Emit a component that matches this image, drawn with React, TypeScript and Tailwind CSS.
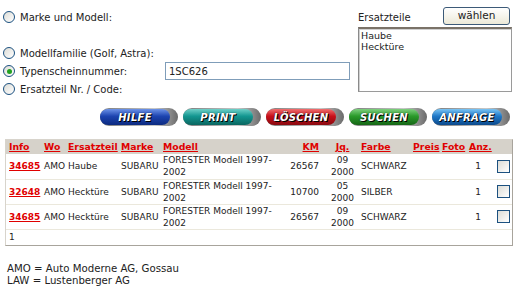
import React from "react";

const font = { fontFamily: '"DejaVu Sans", Verdana, sans-serif' };

function Radio({ checked }: { checked?: boolean }) {
  return (
    <span className="w-[12px] h-[12px] rounded-full border border-[#1c5180] bg-[linear-gradient(135deg,#dcdcd6,#ffffff)] flex items-center justify-center shrink-0">
      {checked && <span className="w-[5px] h-[5px] rounded-full bg-[#21a121]" />}
    </span>
  );
}

function Check() {
  return (
    <span className="block w-[13px] h-[13px] border border-[#1c5180] bg-[linear-gradient(135deg,#dcdcd6,#ffffff)]" />
  );
}

const buttons = [
  { label: "HILFE", cls: "bg-[linear-gradient(to_bottom,#6d93e8,#1d44b0_45%,#0c2a80)]" },
  { label: "PRINT", cls: "bg-[linear-gradient(to_bottom,#6fd0c8,#139690_45%,#0a6660)]" },
  { label: "LÖSCHEN", cls: "bg-[linear-gradient(to_bottom,#f07070,#c8101a_45%,#8a0a10)]" },
  { label: "SUCHEN", cls: "bg-[linear-gradient(to_bottom,#7fd07f,#2a9a2a_45%,#166616)]" },
  { label: "ANFRAGE", cls: "bg-[linear-gradient(to_bottom,#7ac4f4,#1f78c8_45%,#0c4a8c)]" },
];

function Pill({ label, cls }: { label: string; cls: string }) {
  return (
    <div className="w-[78px] h-[18px] rounded-full bg-[linear-gradient(to_right,#7a7a7a,#c8c8c8_70%,#6a6a6a)] flex items-center">
      <div className={`w-[70px] h-[16px] rounded-full flex items-center justify-center ${cls}`}>
        <span className="text-white font-bold italic text-[10px] tracking-[0.3px] [text-shadow:0_0_1px_#000,1px_1px_0_#000]" style={font}>
          {label}
        </span>
      </div>
    </div>
  );
}

const rows = [
  { id: "34685", teil: "Haube", km: "26567", m: "09", farbe: "SCHWARZ" },
  { id: "32648", teil: "Hecktüre", km: "10700", m: "05", farbe: "SILBER" },
  { id: "34685", teil: "Hecktüre", km: "26567", m: "09", farbe: "SCHWARZ" },
];

const th = "text-[#e00000] underline text-left pl-[3px] whitespace-nowrap font-normal";

export default function App() {
  return (
    <div className="w-[518px] h-[293px] bg-white text-[#222] text-[10px] overflow-hidden" style={font}>
      <div className="flex">
        <div className="w-[358px] pl-[3px] pt-[8px] flex flex-col">
          <div className="h-[18px] flex items-center gap-[5px]"><Radio /><span>Marke und Modell:</span></div>
          <div className="h-[18px]" />
          <div className="h-[18px] flex items-center gap-[5px]"><Radio /><span>Modellfamilie (Golf, Astra):</span></div>
          <div className="h-[18px] flex items-center">
            <div className="w-[162px] flex items-center gap-[5px]"><Radio checked /><span>Typenscheinnummer:</span></div>
            <div className="w-[185px] h-[18px] border border-[#7f9db9] flex items-center pl-[3px]">1SC626</div>
          </div>
          <div className="h-[18px] flex items-center gap-[5px]"><Radio /><span>Ersatzteil Nr. / Code:</span></div>
        </div>
        <div className="w-[154px] pt-[7px] flex flex-col">
          <div className="flex items-center justify-between h-[18px] pr-[2px]">
            <span className="pt-[2px]">Ersatzteile</span>
            <div className="w-[67px] h-[18px] rounded-[3px] border border-[#3c5a78] bg-[linear-gradient(to_bottom,#ffffff,#ece9d8)] flex items-center justify-center text-[10.5px]">wählen</div>
          </div>
          <div className="mt-[2px] h-[65px] border border-[#9a9a9a] border-t-[#7a7268] border-l-[#8a8a8a] border-t-2 px-[2px] pt-[1px] leading-[11px] text-[9.5px] shadow-[inset_1px_1px_0_#d0d0d0]">
            <div>Haube</div>
            <div>Hecktüre</div>
          </div>
        </div>
      </div>

      <div className="mt-[10px] pl-[100px] flex gap-[5px]">
        {buttons.map((b) => (
          <Pill key={b.label} {...b} />
        ))}
      </div>

      <div className="mt-[13px] ml-[5px] w-[508px] border border-[#d8d4cc] border-r-[#a8a49c] border-b-[#a8a49c]">
        <table className="w-full table-fixed border-collapse text-[9px]">
          <colgroup>
            <col className="w-[35px]" />
            <col className="w-[24px]" />
            <col className="w-[53px]" />
            <col className="w-[42px]" />
            <col className="w-[130px]" />
            <col className="w-[37px]" />
            <col className="w-[31px]" />
            <col className="w-[52px]" />
            <col className="w-[29px]" />
            <col className="w-[27px]" />
            <col className="w-[25px]" />
            <col className="w-[21px]" />
          </colgroup>
          <thead>
            <tr className="bg-[#d6d2ca] h-[14px] text-[9.3px] leading-[12px]">
              <th className={th}><span className="font-bold">Info</span></th>
              <th className={th}><span className="font-bold">Wo</span></th>
              <th className={th}><span className="font-bold">Ersatzteil</span></th>
              <th className={th}><span className="font-bold">Marke</span></th>
              <th className={th}><span className="font-bold">Modell</span></th>
              <th className="text-[#e00000] underline text-right pr-[8px] whitespace-nowrap font-normal"><span className="font-bold">KM</span></th>
              <th className="text-[#e00000] underline text-center whitespace-nowrap font-normal"><span className="font-bold">Jq.</span></th>
              <th className={th}><span className="font-bold">Farbe</span></th>
              <th className={th}><span className="font-bold">Preis</span></th>
              <th className={th}><span className="font-bold">Foto</span></th>
              <th className={th}><span className="font-bold">Anz.</span></th>
              <th />
            </tr>
          </thead>
          <tbody>
            {rows.map((r, i) => (
              <tr key={i} className="h-[25px] border-b border-[#ebe8dc] leading-[12px]">
                <td className="pl-[3px]"><span className="text-[#e00000] font-bold underline">{r.id}</span></td>
                <td className="pl-[3px]">AMO</td>
                <td className="pl-[3px] whitespace-nowrap">{r.teil}</td>
                <td className="pl-[3px]">SUBARU</td>
                <td className="pl-[3px] whitespace-nowrap">FORESTER Modell 1997-<br />2002</td>
                <td className="text-right pr-[8px]">{r.km}</td>
                <td className="text-center">{r.m}<br />2000</td>
                <td className="pl-[3px]">{r.farbe}</td>
                <td />
                <td />
                <td className="text-right pr-[10px]">1</td>
                <td className="pl-[6px]"><Check /></td>
              </tr>
            ))}
            <tr className="h-[16px]">
              <td className="pl-[3px]" colSpan={12}>1</td>
            </tr>
          </tbody>
        </table>
      </div>

      <div className="mt-[17px] ml-[7px] leading-[12px] text-[10.2px]">
        <div>AMO = Auto Moderne AG, Gossau</div>
        <div>LAW = Lustenberger AG</div>
      </div>
    </div>
  );
}
